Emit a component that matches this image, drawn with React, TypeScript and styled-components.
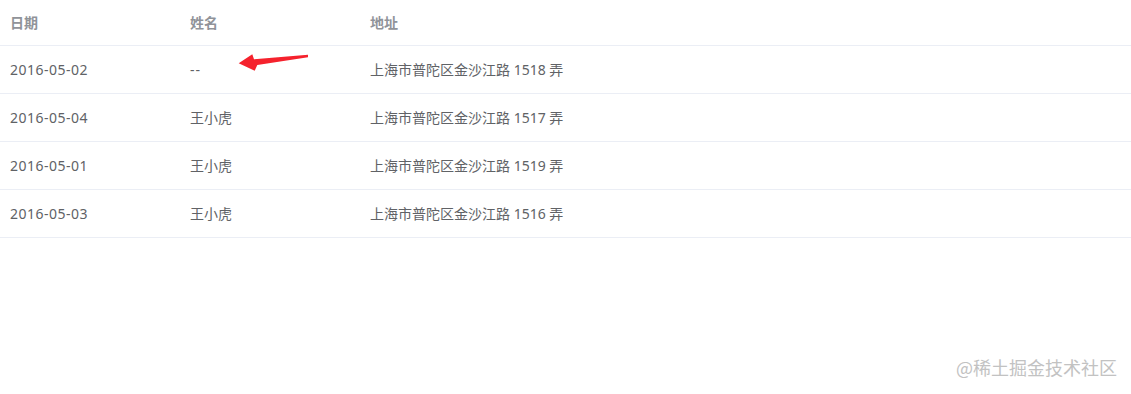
import React from 'react';
import styled, { createGlobalStyle } from 'styled-components';

const GlobalStyle = createGlobalStyle`
    html, body {
        margin: 0;
        padding: 0;
        background: #fff;
    }
    body {
        font-family: "Microsoft YaHei", "Noto Sans", "Noto Sans CJK SC", sans-serif;
    }
`

type Row = {
    date: string;
    name: string;
    address: string;
}

const rows: Row[] = [
    { date: '2016-05-02', name: '', address: '上海市普陀区金沙江路 1518 弄' },
    { date: '2016-05-04', name: '王小虎', address: '上海市普陀区金沙江路 1517 弄' },
    { date: '2016-05-01', name: '王小虎', address: '上海市普陀区金沙江路 1519 弄' },
    { date: '2016-05-03', name: '王小虎', address: '上海市普陀区金沙江路 1516 弄' },
]

function App() {
    return (
        <Page>
            <GlobalStyle />
            <Table>
                <colgroup>
                    <col width={180} />
                    <col width={180} />
                    <col />
                </colgroup>
                <thead>
                    <tr>
                        <Th>日期</Th>
                        <Th>姓名</Th>
                        <Th>地址</Th>
                    </tr>
                </thead>
                <tbody>
                    {rows.map((row, i) => (
                        <tr key={i}>
                            <Td $spacing="0.5px">{row.date}</Td>
                            <Td $marked={i === 0} $spacing={row.name ? '0' : '1px'}>
                                {row.name || '--'}
                                {i === 0 && (
                                    <Arrow viewBox="0 0 72 20" width={72} height={20}>
                                        <polygon
                                            points="0.7,10.3 14.3,1.3 16,6.3 70,1.7 70,4.3 19.3,12 16.7,17.7"
                                            fill="#f5222d"
                                        />
                                    </Arrow>
                                )}
                            </Td>
                            <Td>{row.address}</Td>
                        </tr>
                    ))}
                </tbody>
            </Table>
            <Watermark>@稀土掘金技术社区</Watermark>
        </Page>
    )
}

export default App


const Page = styled.div`
    position: relative;
    width: 1131px;
    height: 394px;
    overflow: hidden;
    background: #fff;
`

const Table = styled.table`
    width: 100%;
    border-collapse: collapse;
    table-layout: fixed;
    font-size: 14px;
`

const Th = styled.th`
    height: 45px;
    padding: 0 10px;
    text-align: left;
    font-weight: 700;
    color: #909399;
    border-bottom: 1px solid #ebeef5;
    vertical-align: middle;
    line-height: 23px;
`

const Td = styled.td<{ $marked?: boolean; $spacing?: string }>`
    position: ${({ $marked }) => ($marked ? 'relative' : 'static')};
    height: 47px;
    padding: 0 10px;
    color: #606266;
    border-bottom: 1px solid #ebeef5;
    vertical-align: middle;
    line-height: 23px;
    letter-spacing: ${({ $spacing }) => $spacing || '0'};
`

const Arrow = styled.svg`
    position: absolute;
    left: 58px;
    top: 7px;
`

const Watermark = styled.div`
    position: absolute;
    right: 14px;
    bottom: 14px;
    font-size: 18px;
    color: #c2c2c2;
    font-family: "Noto Sans CJK SC", sans-serif;
`
